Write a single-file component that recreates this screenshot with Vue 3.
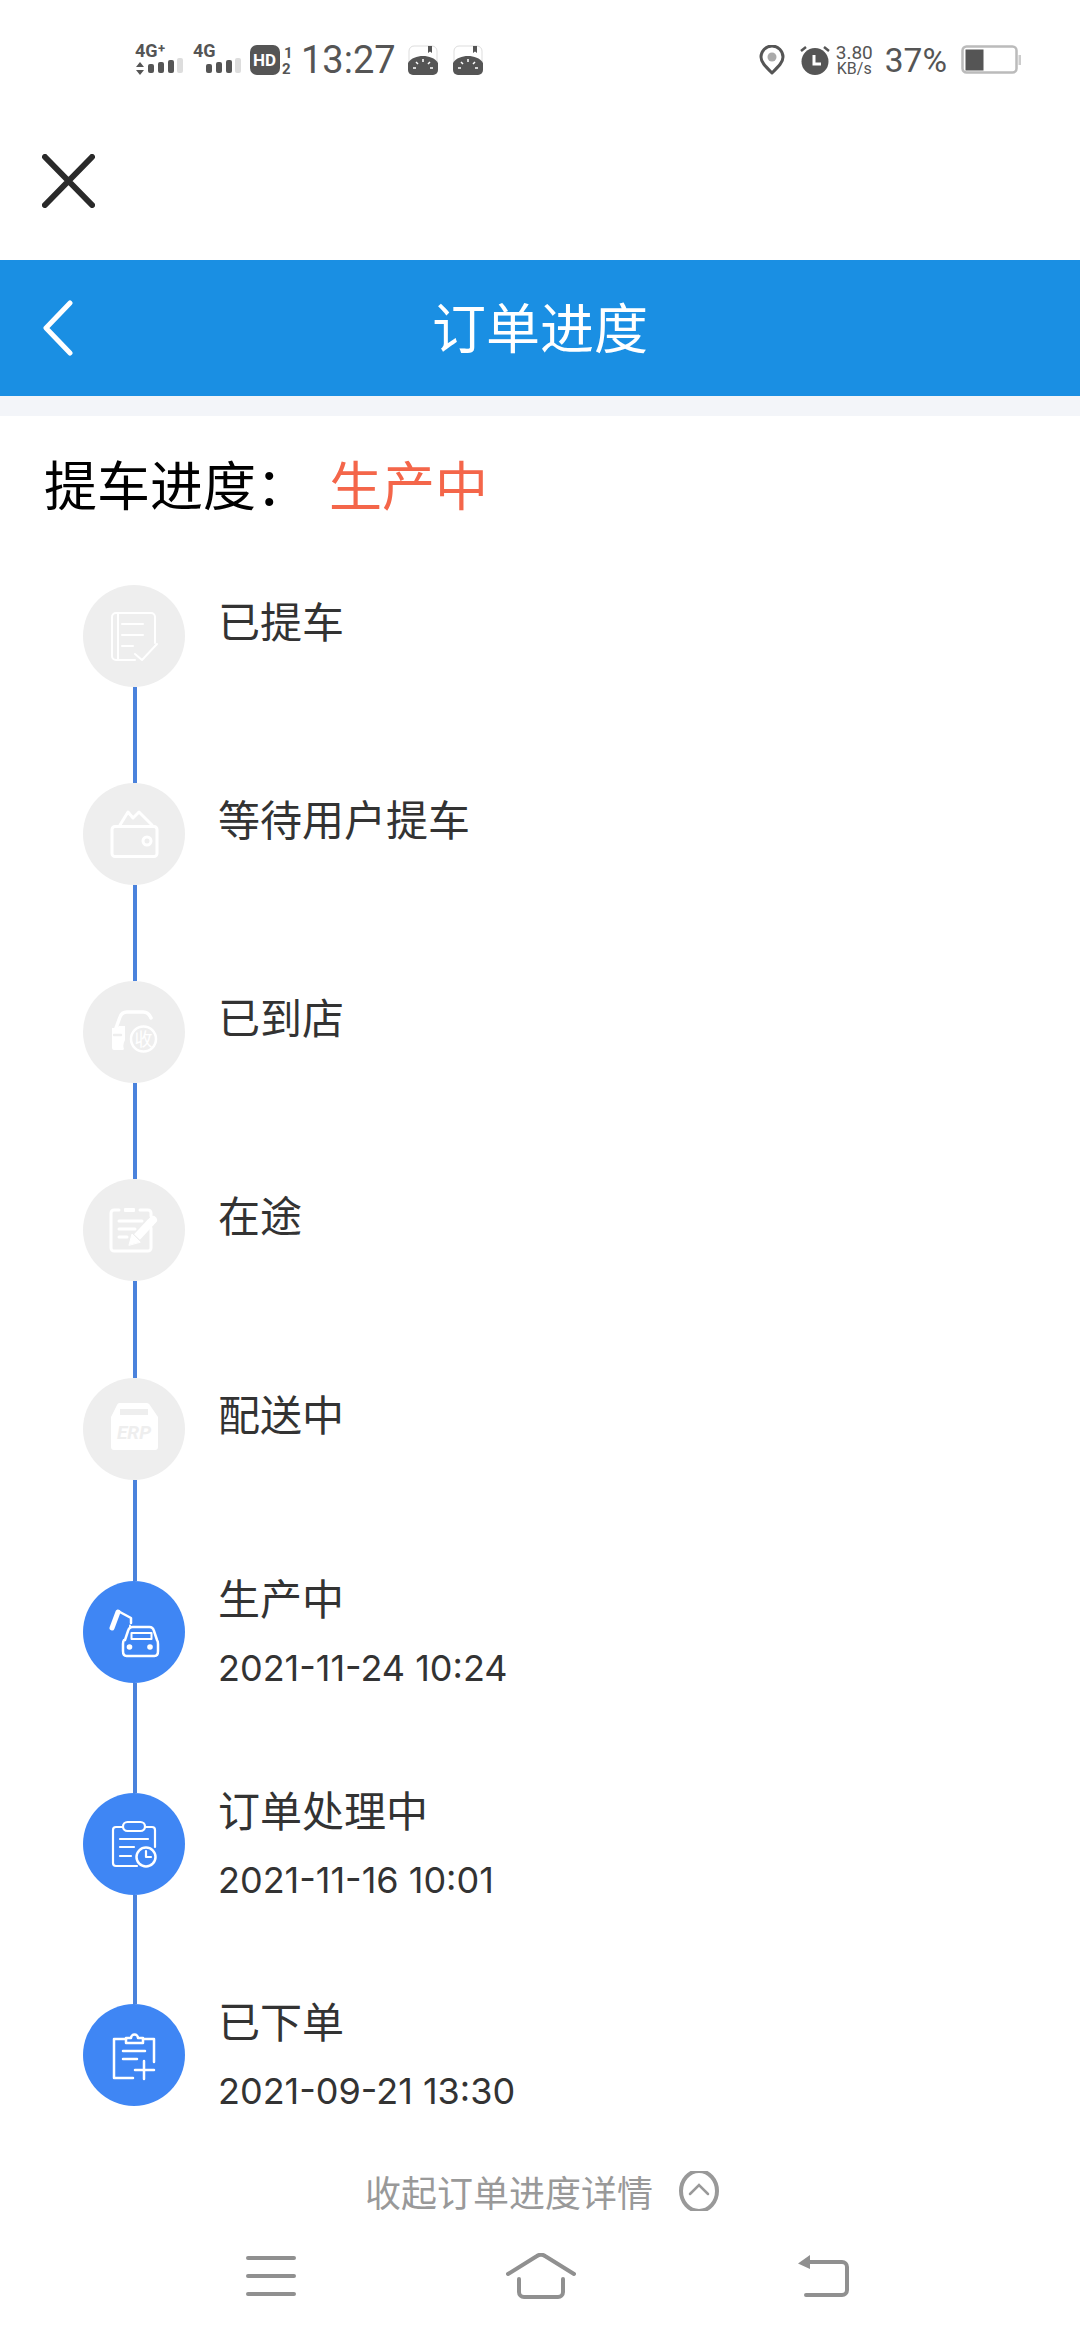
<script setup>
const steps = [
  { id: 'a', label: '已提车', gap: 198 },
  { id: 'b', label: '等待用户提车', gap: 198 },
  { id: 'c', label: '已到店', gap: 198 },
  { id: 'd', label: '在途', gap: 199 },
  { id: 'e', label: '配送中', gap: 203 },
  { id: 'f', label: '生产中', date: '2021-11-24 10:24', gap: 212, on: true },
  { id: 'g', label: '订单处理中', date: '2021-11-16 10:01', gap: 211, on: true },
  { id: 'h', label: '已下单', date: '2021-09-21 13:30', on: true }
]
</script>

<template>
  <div class="page">
    <div class="status">
      <div class="status-left">
        <svg width="50" height="40" viewBox="0 -3 50 40">
          <text x="0" y="14" class="sig-t">4G</text><text x="23" y="10" class="sig-p">+</text>
          <path d="M5 19l4 5H1zM5 32l-4-5h8z" fill="#555"/>
          <rect x="13" y="21" width="6" height="9" rx="2" fill="#555"/>
          <rect x="23" y="19" width="6" height="11" rx="2" fill="#555"/>
          <rect x="33" y="17" width="6" height="13" rx="2" fill="#555"/>
          <rect x="42" y="15" width="6" height="15" rx="2" fill="#ddd"/>
        </svg>
        <svg class="sig2" width="48" height="40" viewBox="0 -3 48 40">
          <text x="0" y="14" class="sig-t">4G</text>
          <rect x="13" y="21" width="6" height="9" rx="2" fill="#555"/>
          <rect x="23" y="19" width="6" height="11" rx="2" fill="#555"/>
          <rect x="33" y="17" width="6" height="13" rx="2" fill="#555"/>
          <rect x="42" y="15" width="6" height="15" rx="2" fill="#ddd"/>
        </svg>
        <svg class="hd" width="44" height="36" viewBox="0 -3 44 36">
          <rect x="0" y="0" width="30" height="30" rx="7" fill="#555"/>
          <text x="3" y="21" class="hd-t">HD</text>
          <text x="34" y="13" class="hd-n">1</text>
          <text x="32" y="29" class="hd-n">2</text>
        </svg>
        <span class="clock">13:27</span>
        <svg class="game" width="30" height="30" viewBox="0 0 30 30">
          <rect x="1" y="1" width="28" height="28" rx="5" fill="#fff" stroke="#ddd" stroke-width="1"/>
          <path d="M20 1h4v7l-2-1.500-2 1.500z" fill="#555"/>
          <path d="M0 18c3-5 9-7 15-7s12 2 15 7v7a5 5 0 0 1-5 5H5a5 5 0 0 1-5-5z" fill="#555"/>
          <path d="M15 14v3M8 17l2 2M22 17l-2 2M5 23h3M22 23h3" stroke="#fff" stroke-width="1.500"/>
        </svg>
        <svg class="game game2" width="30" height="30" viewBox="0 0 30 30">
          <rect x="1" y="1" width="28" height="28" rx="5" fill="#fff" stroke="#ddd" stroke-width="1"/>
          <path d="M20 1h4v7l-2-1.500-2 1.500z" fill="#555"/>
          <path d="M0 18c3-5 9-7 15-7s12 2 15 7v7a5 5 0 0 1-5 5H5a5 5 0 0 1-5-5z" fill="#555"/>
          <path d="M15 14v3M8 17l2 2M22 17l-2 2M5 23h3M22 23h3" stroke="#fff" stroke-width="1.500"/>
        </svg>
      </div>
      <div class="status-right">
        <svg class="pin" width="26" height="30" viewBox="0 0 26 30">
          <path d="M13 28C6 21 2 17 2 12a11 11 0 0 1 22 0c0 5-4 9-11 16z" fill="none" stroke="#555" stroke-width="3" stroke-linejoin="round"/>
          <circle cx="13" cy="12" r="4.500" fill="#aaa"/>
        </svg>
        <svg class="alarm" width="30" height="30" viewBox="0 0 30 30">
          <circle cx="15" cy="16.500" r="13.500" fill="#555"/>
          <path d="M1 6l5-4M29 6l-5-4" stroke="#555" stroke-width="2.500"/>
          <path d="M14 10v9h7" fill="none" stroke="#fff" stroke-width="3"/>
        </svg>
        <div class="speed"><span class="speed-num">3.80</span><span class="speed-unit">KB/s</span></div>
        <span class="pct">37%</span>
        <svg width="60" height="30" viewBox="0 0 60 30">
          <rect x="1.500" y="1.500" width="54" height="26" rx="4" fill="#fff" stroke="#bbb" stroke-width="2.500"/>
          <rect x="4.500" y="4.500" width="18" height="21" fill="#555"/>
          <rect x="57.500" y="10" width="2.500" height="10" fill="#ccc"/>
        </svg>
      </div>
    </div>

    <div class="close-bar">
      <svg width="53" height="54" viewBox="0 0 53 54">
        <path d="M3 3l47 48M50 3L3 51" stroke="#2a2a2a" stroke-width="6" stroke-linecap="round"/>
      </svg>
    </div>

    <header class="nav">
      <svg class="back" width="32" height="56" viewBox="0 0 32 56">
        <path d="M28 3L4 28l24 25" fill="none" stroke="#fff" stroke-width="5" stroke-linecap="round" stroke-linejoin="round"/>
      </svg>
      <h1>订单进度</h1>
    </header>
    <div class="divider"></div>

    <div class="summary">
      <span class="summary-label">提车进度：</span><span class="summary-value">生产中</span>
    </div>

    <ol class="steps">
      <li v-for="(s, i) in steps" :key="s.id" class="step" :style="s.gap ? { height: s.gap + 'px' } : null">
        <div class="rail">
          <span class="dot" :class="{ on: s.on }">
            <svg width="60" height="60" viewBox="0 0 60 60" fill="none" stroke="#fff" stroke-width="2.200" stroke-linecap="round" stroke-linejoin="round">
              <template v-if="s.id === 'a'">
                <path d="M51 37V11a4 4 0 0 0-4-4H12a4 4 0 0 0-4 4v39a4 4 0 0 0 4 4h19" stroke-width="2"/>
                <path d="M14 8v45M18 18h21M18 29h21M18 40h11M31 48l7 6 15-16" stroke-width="2"/>
              </template>
              <template v-else-if="s.id === 'b'">
                <rect x="8" y="22.500" width="45" height="30" rx="3" stroke-width="3"/>
                <path d="M16 21l8-13 5 6 6-6 13 13" stroke-width="3"/>
                <circle cx="43" cy="37" r="4" stroke-width="3"/>
              </template>
              <template v-else-if="s.id === 'c'">
                <path d="M12 26l4-11c1-3 4-5 7-5h16c3 0 6 1 8 6" stroke-width="3.500"/>
                <path d="M8 26h5l2-2h6v14c-2 4-2 7-1 9l-1 1H10a2 2 0 0 1-2-2z" fill="#fff" stroke="none"/>
                <path d="M10 33h7" stroke="#eee" stroke-width="2.500"/>
                <circle cx="39.500" cy="37" r="14.500" fill="#eee" stroke="none"/>
                <circle cx="39.500" cy="37" r="12.500" stroke-width="2.500"/>
                <text x="39.500" y="43.500" class="shou">收</text>
              </template>
              <template v-else-if="s.id === 'd'">
                <path d="M15 10h-5a3 3 0 0 0-3 3v35a3 3 0 0 0 3 3h34a3 3 0 0 0 3-3V28M36 10h8a3 3 0 0 1 3 3v3" stroke-width="3"/>
                <rect x="20" y="8" width="11" height="4" rx="1" fill="#fff" stroke="none"/>
                <path d="M15 21h23M15 29h16M15 37h8" stroke-width="3"/>
                <path d="M33 37l14-15" stroke-width="8" stroke-linecap="butt"/>
                <path d="M47 22l2-2" stroke-width="8"/>
                <path d="M25 45l3-11 8 8z" fill="#fff" stroke="#fff" stroke-width="1"/>
              </template>
              <template v-else-if="s.id === 'e'">
                <path d="M15 4h28a3 3 0 0 1 2.500 1.500L54 18v30a3 3 0 0 1-3 3H10a3 3 0 0 1-3-3V18l6-12a3 3 0 0 1 2-2z" fill="#fff" stroke="none"/>
                <rect x="16" y="10" width="28" height="6" fill="#eee" stroke="none"/>
                <text x="30" y="40" class="erp">ERP</text>
              </template>
              <template v-else-if="s.id === 'f'">
                <path d="M8 26l6-16" stroke-width="5"/>
                <path d="M14 9l13 7v5" stroke-width="2.500"/>
                <path d="M26 23.500v1" stroke-width="2"/>
                <path d="M22 38l3-9c.7-2.500 2-4 4.500-4h17c2.500 0 3.800 1.500 4.500 4l3 9c.8 1 1 2 1 4v7c0 3-1 5-3.500 5h-28c-2.500 0-3.500-2-3.500-5v-7c0-2 .2-3 1-4z" stroke-width="2.500" transform="translate(-1 0)"/>
                <rect x="27.500" y="31" width="20" height="6" stroke-width="2"/>
                <circle cx="25.500" cy="45" r="2.800" fill="#fff" stroke="none"/>
                <circle cx="46" cy="45" r="2.800" fill="#fff" stroke="none"/>
              </template>
              <template v-else-if="s.id === 'g'">
                <path d="M51 33V16a3 3 0 0 0-3-3h-7M19 13h-7a3 3 0 0 0-3 3v33a3 3 0 0 0 3 3h21"/>
                <rect x="19" y="8" width="22" height="9" rx="4.500"/>
                <path d="M16 25h28M16 33h14M16 42h11"/>
                <circle cx="42" cy="43" r="9.500" stroke-width="2.500"/>
                <path d="M42 37v6h5"/>
              </template>
              <template v-else>
                <path d="M22 14H10v39h19M39 14h11v23" stroke-width="2.500"/>
                <path d="M22 18v-5h5a3.500 3.500 0 0 1 7 0h5v5z" stroke-width="2.500"/>
                <path d="M19 26h22M19 34h14M31 45h19M40 36v18" stroke-width="2.500"/>
              </template>
            </svg>
          </span>
          <span v-if="i < steps.length - 1" class="line"></span>
        </div>
        <div class="info" :class="{ dated: s.date }">
          <div class="label">{{ s.label }}</div>
          <div v-if="s.date" class="date">{{ s.date }}</div>
        </div>
      </li>
    </ol>

    <div class="collapse">
      <span>收起订单进度详情</span>
      <svg width="40" height="40" viewBox="0 0 40 40">
        <ellipse cx="20" cy="20" rx="18" ry="20" fill="none" stroke="#999" stroke-width="4"/>
        <path d="M11 23l9-9 9 9" fill="none" stroke="#999" stroke-width="2.500" stroke-linecap="round"/>
      </svg>
    </div>

    <nav class="sysnav">
      <svg width="50" height="40" viewBox="0 0 50 40"><path d="M2 2h46M2 20h46M2 38h46" stroke="#909090" stroke-width="4" stroke-linecap="round"/></svg>
      <svg class="home" width="70" height="46" viewBox="0 0 70 46"><path d="M2 21L31 3c3-2 5-2 8 0l29 18M13 26v13a5 5 0 0 0 5 5h34a5 5 0 0 0 5-5V26" fill="none" stroke="#909090" stroke-width="4" stroke-linecap="round" stroke-linejoin="round"/></svg>
      <svg class="ret" width="51" height="42" viewBox="0 0 51 42"><path d="M12 0v14L0 8.500z" fill="#909090"/><path d="M10 7h34a5 5 0 0 1 5 5v23a5 5 0 0 1-5 5H8" fill="none" stroke="#909090" stroke-width="4" stroke-linecap="round"/></svg>
    </nav>
  </div>
</template>

<style scoped>
.page {
  width: 1080px;
  height: 2340px;
  background: #fff;
  overflow: hidden;
  font-family: "Noto Sans CJK SC", "Noto Sans", sans-serif;
  color: #333;
}
.status {
  height: 120px;
  padding: 38px 59px 0 135px;
  box-sizing: border-box;
  display: flex;
  justify-content: space-between;
  align-items: flex-start;
}
.status-left, .status-right { display: flex; align-items: center; height: 44px; }
.sig-t { font: 700 18px Roboto, sans-serif; fill: #555; }
.sig-p { font: 700 13px Roboto, sans-serif; fill: #555; }
.sig2 { margin-left: 8px; }
.hd { margin-left: 9px; }
.hd-t { font: 700 17px Roboto, sans-serif; fill: #fff; }
.hd-n { font: 700 15px Roboto, sans-serif; fill: #555; }
.clock {
  font: 400 38px Roboto, sans-serif;
  color: #555;
  margin-left: 7px;
}
.game { margin-left: 12px; }
.game2 { margin-left: 15px; }
.pin { margin-right: 15px; }
.alarm { margin-right: 6px; }
.speed {
  display: flex;
  flex-direction: column;
  color: #555;
  align-items: center;
  margin-right: 12px;
}
.speed-num { font: 400 19px/17px Roboto, sans-serif; }
.speed-unit { font: 400 16px/16px Roboto, sans-serif; }
.pct { font: 400 33.500px Roboto, sans-serif; color: #555; margin-right: 14px; }
.close-bar {
  height: 140px;
  padding: 34px 0 0 42px;
  box-sizing: border-box;
}
.close-bar svg { display: block; }
.nav {
  height: 136px;
  background: #1a8fe3;
  position: relative;
  display: flex;
  align-items: center;
  justify-content: center;
}
.back { position: absolute; left: 42px; top: 40px; }
.nav h1 {
  margin: 0 0 6px;
  font-size: 54px;
  font-weight: 400;
  color: #fff;
}
.divider { height: 20px; background: #f3f5f9; }
.summary {
  padding: 32px 0 0 44px;
  height: 105px;
  box-sizing: border-box;
  line-height: 70px;
  font-size: 53px;
}
.summary-label { color: #000; display: inline-block; width: 285px; }
.summary-value { color: #f4664a; }
.steps {
  list-style: none;
  margin: 64px 0 0;
  padding: 0 0 0 83px;
}
.step { display: flex; }
.rail { width: 102px; flex: none; height: 100%; display: flex; flex-direction: column; align-items: center; }
.dot {
  width: 102px;
  height: 102px;
  border-radius: 50%;
  background: #eee;
  display: flex;
  align-items: center;
  justify-content: center;
  flex: none;
}
.dot.on { background: #3f86f4; }
.line { width: 4px; flex: 1; margin-left: 2px; background: #4a82dc; }
.info { margin-left: 33px; margin-top: 4px; }
.info.dated { margin-top: -15px; }
.label { font-size: 42px; line-height: 62px; color: #333; }
.date { font: 400 36px/52px Inter, Roboto, sans-serif; color: #333; margin-top: 14px; }
.erp { font: italic 700 19px Roboto, sans-serif; fill: #eee; stroke: none; text-anchor: middle; }
.shou { font: 400 18px "Noto Sans CJK SC", sans-serif; fill: #fff; stroke: none; text-anchor: middle; }
.collapse {
  margin-top: 49px;
  margin-left: 365px;
  display: flex;
  align-items: center;
  gap: 26px;
  color: #999;
  font-size: 36px;
  line-height: 50px;
}
.sysnav {
  display: flex;
  align-items: center;
  margin-top: 37px;
  padding-left: 246px;
}
.home { margin-left: 210px; }
.ret { margin-left: 222px; }
</style>

<style>
html, body { margin: 0; background: #fff; }
</style>
